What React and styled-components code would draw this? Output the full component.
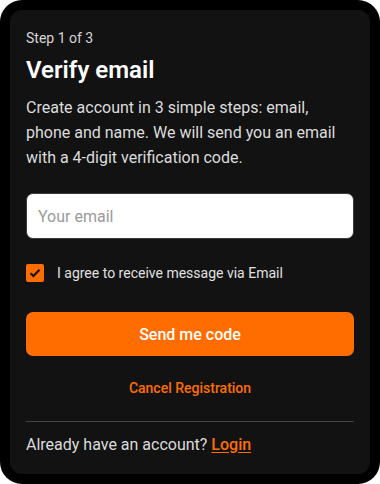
import React from "react";
import styled, { createGlobalStyle } from "styled-components";

const Global = createGlobalStyle`
  html, body { margin: 0; padding: 0; background: #fff; }
  body { font-family: Roboto, "Noto Sans", sans-serif; -webkit-font-smoothing: antialiased; }
  * { box-sizing: border-box; }
`;

const Frame = styled.div`
  width: 380px;
  height: 484px;
  background: #000;
  border-radius: 22px;
  padding: 10px;
  display: flex;
`;

const Card = styled.div`
  flex: 1;
  background: #121212;
  border-radius: 12px;
  padding: 19px 16px 0 16px;
  display: flex;
  flex-direction: column;
`;

const Step = styled.div`
  font-size: 14px;
  line-height: 18px;
  color: #d6d6d6;
`;

const Title = styled.h1`
  margin: 8px 0 0 0;
  font-size: 24px;
  line-height: 30px;
  font-weight: 600;
  color: #fff;
`;

const Text = styled.p`
  margin: 10px 0 0 0;
  font-size: 16px;
  line-height: 25px;
  color: #dcdcdc;
`;

const Input = styled.input`
  margin-top: 23px;
  height: 46px;
  width: 100%;
  border: 1px solid #3a3a3a;
  border-radius: 7px;
  background: #fff;
  padding: 0 11px;
  font-family: inherit;
  font-size: 16px;
  color: #222;
  outline: none;
  &::placeholder { color: #9a9a9a; }
`;

const CheckRow = styled.label`
  margin-top: 25px;
  display: flex;
  align-items: center;
  gap: 13px;
  font-size: 14px;
  line-height: 18px;
  color: #e0e0e0;
`;

const Box = styled.span`
  width: 18px;
  height: 18px;
  border-radius: 2px;
  background: #ff6d00;
  display: flex;
  align-items: center;
  justify-content: center;
  flex-shrink: 0;
`;

const Button = styled.button`
  margin-top: 30px;
  height: 44px;
  width: 100%;
  border: none;
  border-radius: 7px;
  background: #ff6d00;
  color: #fff;
  font-family: inherit;
  font-size: 16px;
  font-weight: 500;
`;

const Cancel = styled.a`
  margin-top: 23px;
  align-self: center;
  font-size: 14px;
  line-height: 18px;
  font-weight: 500;
  color: #ff6d00;
`;

const Divider = styled.hr`
  margin: 24px 0 0 0;
  border: none;
  height: 1px;
  background: #444;
`;

const Footer = styled.div`
  margin-top: 13px;
  font-size: 16px;
  line-height: 20px;
  color: #dcdcdc;
`;

const Link = styled.a`
  color: #ff6d00;
  font-weight: 500;
  text-decoration: underline;
  text-underline-offset: 2px;
`;

export default function App() {
  return (
    <>
      <Global />
      <Frame>
        <Card>
          <Step>Step 1 of 3</Step>
          <Title>Verify email</Title>
          <Text>
            Create account in 3 simple steps: email, phone and name. We will send you an email with a 4-digit verification code.
          </Text>
          <Input placeholder="Your email" />
          <CheckRow>
            <Box>
              <svg width="12" height="10" viewBox="0 0 12 10">
                <path d="M1.5 5.2 L4.4 8 L10.5 1.8" fill="none" stroke="#111" strokeWidth="2" />
              </svg>
            </Box>
            I agree to receive message via Email
          </CheckRow>
          <Button>Send me code</Button>
          <Cancel>Cancel Registration</Cancel>
          <Divider />
          <Footer>
            Already have an account? <Link>Login</Link>
          </Footer>
        </Card>
      </Frame>
    </>
  );
}
